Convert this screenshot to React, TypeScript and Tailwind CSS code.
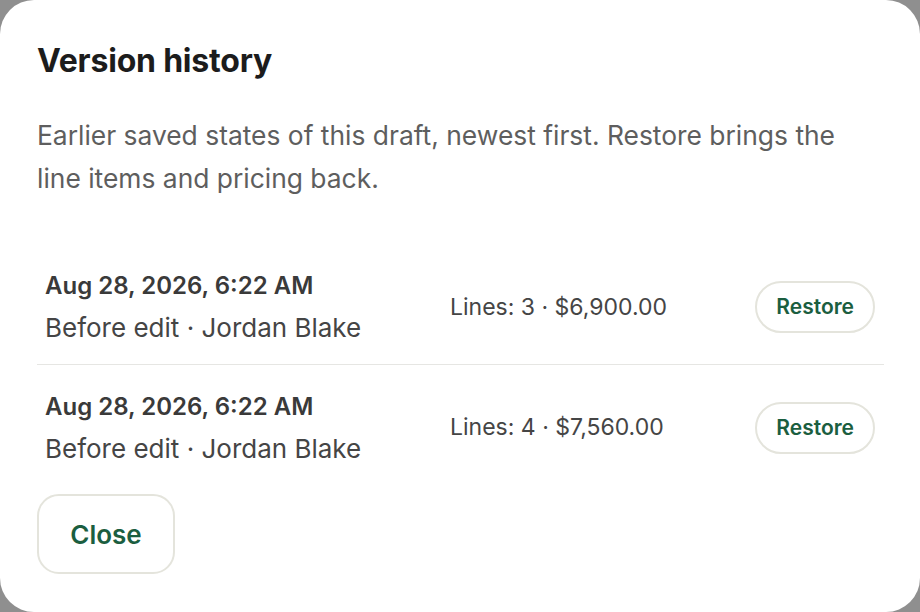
import React from 'react'

type Version = { when: string; note: string; lines: number; total: string }

const versions: Version[] = [
  { when: 'Aug 28, 2026, 6:22 AM', note: 'Before edit · Jordan Blake', lines: 3, total: '$6,900.00' },
  { when: 'Aug 28, 2026, 6:22 AM', note: 'Before edit · Jordan Blake', lines: 4, total: '$7,560.00' },
]

export default function App() {
  return (
    <div className="h-[612px] w-[920px] bg-[#8f8f8f] font-['Inter',sans-serif]">
      <div className="h-full w-full rounded-[34px] bg-white px-[37px] pt-[41px]">
        <h2 className="text-[32px] font-bold leading-[40px] tracking-[-0.2px] text-[#1c1c1c]">
          Version history
        </h2>
        <p className="mt-[33px] max-w-[820px] text-[26.4px] leading-[43px] text-[#5e5e5e]">
          Earlier saved states of this draft, newest first. Restore brings the line items and pricing back.
        </p>

        <div className="mt-[45px] w-[847px]">
          {versions.map((v, i) => (
            <div
              key={i}
              className={`flex h-[120px] items-center pl-[8px] pr-[9px] pt-[5px] ${i === 0 ? 'border-b border-[#e6e6e3]' : ''}`}
            >
              <div className="w-[405px]">
                <div className="text-[24px] font-semibold leading-[42px] text-[#3a3a3a]">{v.when}</div>
                <div className="text-[26px] leading-[42px] text-[#454545]">{v.note}</div>
              </div>
              <div className="flex-1 text-[23px] text-[#454545]">
                Lines: {v.lines} · {v.total}
              </div>
              <button className="h-[52px] rounded-full border-2 border-[#e4e4dc] px-[19px] text-[21px] font-semibold text-[#1b5e40]">
                Restore
              </button>
            </div>
          ))}
        </div>

        <button className="mt-[9px] h-[80px] w-[138px] rounded-[22px] border-2 border-[#e4e4dc] text-[26px] font-semibold text-[#1b5e40]">
          Close
        </button>
      </div>
    </div>
  )
}
